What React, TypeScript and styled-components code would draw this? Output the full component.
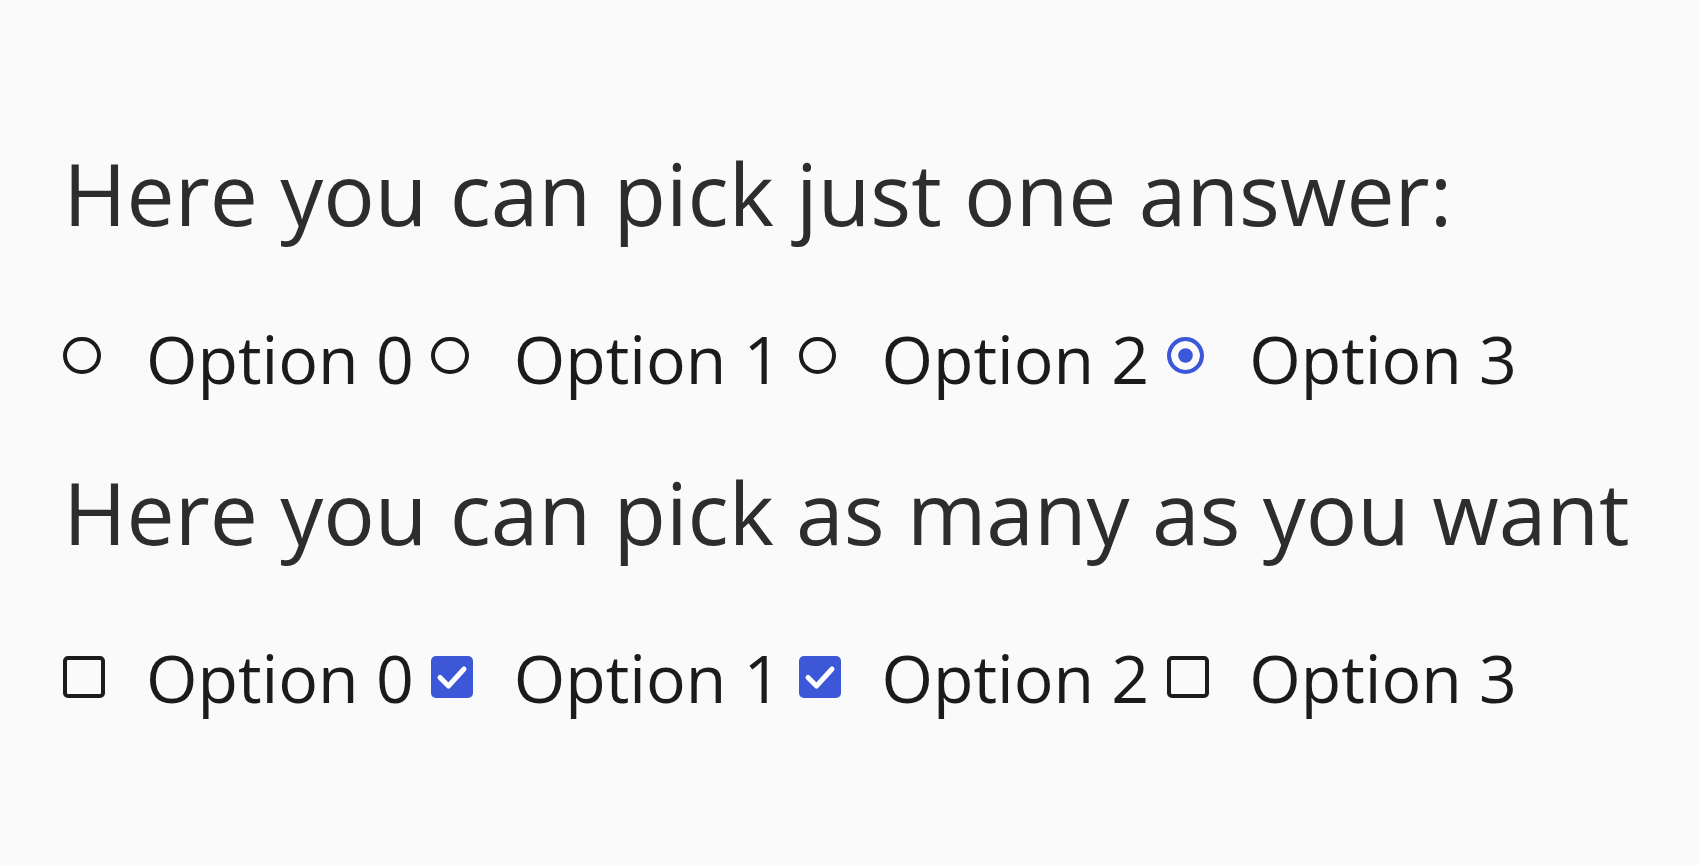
import React, { useState } from "react";
import styled, { createGlobalStyle } from "styled-components";

const BLUE = "#3c57d7";
const INK = "#1b1b1b";

const GlobalStyle = createGlobalStyle`
  html, body {
    margin: 0;
    padding: 0;
    background: #fafafa;
    font-family: "Open Sans", "Noto Sans", sans-serif;
  }
`;

const Page = styled.div`
  padding: 133.6px 0 0 60px;
  min-height: 865px;
  box-sizing: border-box;
`;

const Heading = styled.h2<{ $first?: boolean }>`
  margin: ${(p) => (p.$first ? "0" : "50.9px")} 0 62px 3.3px;
  font-size: 85.8px;
  font-weight: 400;
  line-height: normal;
  color: #2d2d2d;
  white-space: nowrap;
`;

const Row = styled.div`
  display: flex;
  align-items: center;
  padding-left: 3.3px;
  font-size: 66.2px;
  line-height: normal;
  color: ${INK};
`;

const Item = styled.label`
  display: flex;
  align-items: center;
  gap: 40.7px;
  margin-right: 17.3px;
  cursor: pointer;
  white-space: nowrap;
`;

const HiddenInput = styled.input`
  position: absolute;
  opacity: 0;
  width: 0;
  height: 0;
  margin: 0;
`;

const Control = styled.span`
  position: relative;
  display: flex;
  align-items: flex-start;
  justify-content: flex-start;
  width: 42px;
  height: 42px;
  flex: none;
`;

const RadioDot = styled.span<{ $on: boolean }>`
  width: 37.5px;
  height: 37.5px;
  box-sizing: border-box;
  border-radius: 50%;
  border: 4px solid ${(p) => (p.$on ? BLUE : INK)};
  background: ${(p) => (p.$on ? BLUE : "transparent")};
  box-shadow: ${(p) => (p.$on ? "inset 0 0 0 7.2px #fafafa" : "none")};
`;

const CheckBox = styled.span<{ $on: boolean }>`
  display: flex;
  width: 42px;
  height: 42px;
  box-sizing: border-box;
  border-radius: 5px;
  border: ${(p) => (p.$on ? "none" : `4px solid ${INK}`)};
  background: ${(p) => (p.$on ? BLUE : "transparent")};
`;

const Text = styled.span`
  display: block;
`;

const options = [0, 1, 2, 3];

export default function App() {
  const [radio, setRadio] = useState(3);
  const [checks, setChecks] = useState<boolean[]>([false, true, true, false]);

  return (
    <>
      <GlobalStyle />
      <Page>
        <Heading $first>Here you can pick just one answer:</Heading>
        <Row role="radiogroup">
          {options.map((i) => (
            <Item key={i}>
              <HiddenInput
                type="radio"
                name="one"
                checked={radio === i}
                onChange={() => setRadio(i)}
              />
              <Control>
                <RadioDot $on={radio === i} />
              </Control>
              <Text>Option {i}</Text>
            </Item>
          ))}
        </Row>
        <Heading>Here you can pick as many as you want</Heading>
        <Row>
          {options.map((i) => (
            <Item key={i}>
              <HiddenInput
                type="checkbox"
                checked={checks[i]}
                onChange={() =>
                  setChecks((c) => c.map((v, j) => (j === i ? !v : v)))
                }
              />
              <Control>
                <CheckBox $on={checks[i]}>
                  {checks[i] && (
                    <svg width="42" height="42" viewBox="0 0 42 42">
                      <polyline
                        points="9,21.5 17.5,30 33,13"
                        fill="none"
                        stroke="#ffffff"
                        strokeWidth="5"
                        strokeLinecap="round"
                        strokeLinejoin="round"
                      />
                    </svg>
                  )}
                </CheckBox>
              </Control>
              <Text>Option {i}</Text>
            </Item>
          ))}
        </Row>
      </Page>
    </>
  );
}
